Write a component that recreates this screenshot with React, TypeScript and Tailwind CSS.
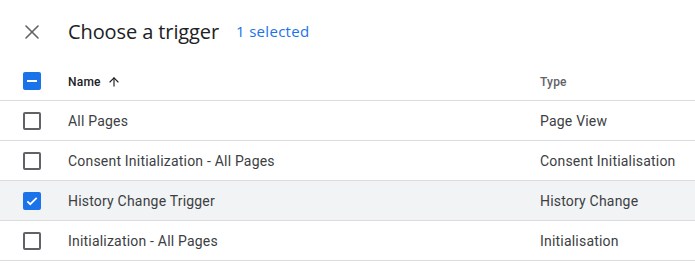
import { X, ArrowUp } from "lucide-react";

const rows = [
  { name: "All Pages", type: "Page View", checked: false },
  { name: "Consent Initialization - All Pages", type: "Consent Initialisation", checked: false },
  { name: "History Change Trigger", type: "History Change", checked: true },
  { name: "Initialization - All Pages", type: "Initialisation", checked: false },
];

const Checkbox = ({ state }: { state: "on" | "off" | "mixed" }) => {
  if (state === "off") {
    return <div className="w-[18px] h-[18px] rounded-[2px] border-2 border-[#5f6368] bg-white" />;
  }
  return (
    <div className="w-[18px] h-[18px] rounded-[2px] bg-[#1a73e8] flex items-center justify-center">
      {state === "mixed" ? (
        <div className="w-[10px] h-[2px] bg-white" />
      ) : (
        <svg width="14" height="14" viewBox="0 0 24 24">
          <path d="M4 12.5l5 5L20 6.5" fill="none" stroke="white" strokeWidth="3" />
        </svg>
      )}
    </div>
  );
};

export default function App() {
  return (
    <div className="w-[695px] h-[263px] bg-white overflow-hidden font-['Roboto',sans-serif]">
      {/* Title bar */}
      <div className="h-[61px] flex items-center pl-[20px] pt-[2px]">
        <X className="w-6 h-6 text-[#5f6368]" strokeWidth={1.6} />
        <h1 className="ml-[24px] text-[20px] text-[#202124] font-['Open_Sans',sans-serif] tracking-[-0.1px]">
          Choose a trigger
        </h1>
        <span className="ml-[17px] text-[15px] text-[#1a73e8] font-['Open_Sans',sans-serif] tracking-[0.3px]">
          1 selected
        </span>
      </div>

      {/* Table header */}
      <div className="h-[40px] flex items-center border-b border-[#dadce0]">
        <div className="w-[68px] pl-[23px] flex items-center">
          <Checkbox state="mixed" />
        </div>
        <div className="w-[472px] pt-[3px] flex items-center gap-[6px] text-[12px] font-medium text-[#202124] tracking-[0.2px]">
          Name
          <ArrowUp className="w-[14px] h-[14px] text-[#202124]" strokeWidth={2} />
        </div>
        <div className="pt-[3px] text-[12px] text-[#5f6368] font-medium tracking-[0.2px]">Type</div>
      </div>

      {rows.map((r) => (
        <div
          key={r.name}
          className={`h-[40px] flex items-center border-b border-[#dadce0] text-[14px] text-[#3c4043] tracking-[0.2px] ${
            r.checked ? "bg-[#f1f3f4]" : "bg-white"
          }`}
        >
          <div className="w-[68px] pl-[23px] flex items-center">
            <Checkbox state={r.checked ? "on" : "off"} />
          </div>
          <div className="w-[472px] pt-[2px]">{r.name}</div>
          <div className="pt-[2px]">{r.type}</div>
        </div>
      ))}
    </div>
  );
}
